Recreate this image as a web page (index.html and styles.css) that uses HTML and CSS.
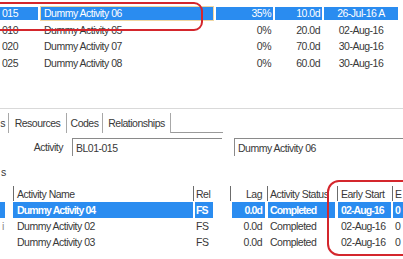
FILE: index.html
```html
<!DOCTYPE html>
<html>
<head>
<meta charset="utf-8">
<title>Relationships</title>
<link rel="stylesheet" href="styles.css">
</head>
<body>
<div class="screen">
  <div class="top-table">
    <div class="trow selected">
      <div class="c id">015</div>
      <div class="c name focus">Dummy Activity 06</div>
      <div class="c num">35%</div>
      <div class="c num">10.0d</div>
      <div class="c date">26-Jul-16 A</div>
    </div>
    <div class="trow">
      <div class="c id">010</div>
      <div class="c name">Dummy Activity 05</div>
      <div class="c num">0%</div>
      <div class="c num">20.0d</div>
      <div class="c date">02-Aug-16</div>
    </div>
    <div class="trow">
      <div class="c id">020</div>
      <div class="c name">Dummy Activity 07</div>
      <div class="c num">0%</div>
      <div class="c num">70.0d</div>
      <div class="c date">30-Aug-16</div>
    </div>
    <div class="trow">
      <div class="c id">025</div>
      <div class="c name">Dummy Activity 08</div>
      <div class="c num">0%</div>
      <div class="c num">60.0d</div>
      <div class="c date">30-Aug-16</div>
    </div>
  </div>

  <div class="panel">
    <div class="tabs">
      <div class="tab t1">s</div>
      <div class="tab t2">Resources</div>
      <div class="tab t3">Codes</div>
      <div class="tab t4 active">Relationships</div>
      <div class="tab-line"></div>
    </div>

    <div class="field-row">
      <div class="field-label">Activity</div>
      <div class="field f1">BL01-015</div>
      <div class="field f2">Dummy Activity 06</div>
    </div>

    <div class="section-label">s</div>

    <div class="rel-table">
      <div class="rrow head">
        <div class="h first"></div>
        <div class="h name">Activity Name</div>
        <div class="h rel">Rel</div>
        <div class="h lag">Lag</div>
        <div class="h status">Activity Status</div>
        <div class="h early">Early Start</div>
        <div class="h extra">E</div>
      </div>
      <div class="rrow selected">
        <div class="r first"><span class="stub"></span></div>
        <div class="r name">Dummy Activity 04</div>
        <div class="r rel">FS</div>
        <div class="r lag">0.0d</div>
        <div class="r status">Completed</div>
        <div class="r early">02-Aug-16</div>
        <div class="r extra">0</div>
      </div>
      <div class="rrow">
        <div class="r first">i</div>
        <div class="r name">Dummy Activity 02</div>
        <div class="r rel">FS</div>
        <div class="r lag">0.0d</div>
        <div class="r status">Completed</div>
        <div class="r early">02-Aug-16</div>
        <div class="r extra">0</div>
      </div>
      <div class="rrow">
        <div class="r first"></div>
        <div class="r name">Dummy Activity 03</div>
        <div class="r rel">FS</div>
        <div class="r lag">0.0d</div>
        <div class="r status">Completed</div>
        <div class="r early">02-Aug-16</div>
        <div class="r extra">0</div>
      </div>
    </div>
  </div>

  <div class="mark mark-top"></div>
  <div class="mark mark-bottom"></div>
</div>
</body>
</html>
```

FILE: styles.css
```css
* { box-sizing: border-box; margin: 0; padding: 0; }
html, body { background: #fff; }
body {
  margin: 0;
  font-family: "Liberation Sans", Arial, sans-serif;
  font-size: 10.5px;
  letter-spacing: -0.5px;
  color: #383838;
}
.screen {
  position: relative;
  width: 403px;
  height: 259px;
  overflow: hidden;
  background: #fff;
}

/* top activity table */
.top-table { padding-top: 5px; height: 108px; }
.trow {
  display: grid;
  grid-template-columns: 38px 174px 57px 47px 74px;
  column-gap: 2px;
  height: 16.5px;
}
.c {
  display: flex;
  align-items: center;
  white-space: nowrap;
  overflow: hidden;
}
.c.id { padding-left: 2px; }
.c.name { padding-left: 4px; }
.c.num { justify-content: flex-end; padding-right: 2px; }
.c.date { justify-content: center; }
.trow.selected .c { background: #2a8cf0; color: #fff; margin: 2px 0; }
.trow.selected .c.focus { margin: 1px 0; border: 1px solid #f0d6a0; padding-left: 3px; }

/* lower panel */
.panel { border-top: 1px solid #d9d9d9; }
.tabs {
  display: flex;
  align-items: flex-end;
  height: 24px;
}
.tab {
  height: 20px;
  display: flex;
  align-items: center;
  justify-content: center;
  border-right: 1px solid #a8a8a8;
  white-space: nowrap;
  overflow: hidden;
}
.t1 { width: 9px; justify-content: flex-end; padding-right: 3px; }
.t2 { width: 58px; }
.t3 { width: 36px; }
.t4 { width: 68px; }
.tab-line { width: 52px; height: 1px; background: #9a9a9a; }

.field-row {
  display: flex;
  margin-top: 5px;
  height: 18px;
}
.field-label {
  width: 63px;
  display: flex;
  align-items: center;
  justify-content: flex-end;
}
.field {
  display: flex;
  align-items: center;
  padding-left: 3px;
  border-top: 1px solid #8a8a8a;
  border-left: 1px solid #8a8a8a;
  white-space: nowrap;
}
.f1 { width: 150px; margin-left: 9px; }
.f2 { flex: 1; margin-left: 12px; }

.section-label {
  margin-top: 9px;
  height: 14px;
  line-height: 14px;
  padding-left: 1px;
}

/* relationships table */
.rel-table { margin-top: 7px; }
.rrow {
  display: grid;
  grid-template-columns: 13px 180px 37px 37px 70px 55px 11px;
  height: 16px;
}
.rrow.head { height: 15px; margin-bottom: 1px; }
.h, .r {
  display: flex;
  align-items: center;
  white-space: nowrap;
  overflow: hidden;
}
.h { border-left: 1px solid #6c6c6c; }
.h.first { border-left: none; }
.h.name { padding-left: 3px; }
.h.rel { padding-left: 2px; }
.h.lag { justify-content: flex-end; padding-right: 5px; }
.h.status { padding-left: 2px; }
.h.early { padding-left: 3px; }
.h.extra { padding-left: 2px; }

.r.first { padding-left: 2px; color: #888; }
.r.name { padding-left: 4px; }
.r.rel { margin-left: 2px; width: 18px; padding-left: 1px; }
.r.lag { margin: 0 2px; justify-content: flex-end; padding-right: 3px; }
.r.status { margin: 0 2px 0 1px; padding-left: 2px; }
.r.early { margin: 0 1px; padding-left: 3px; }
.r.extra { margin-left: 1px; padding-left: 2px; }

.rrow.selected .r { background: #2a8cf0; color: #fff; font-weight: bold; letter-spacing: -0.9px; }
.rrow.selected .r.first { background: transparent; padding-left: 0; }
.stub { display: block; width: 5px; height: 16px; background: #2a8cf0; }

/* red annotation marks */
.mark {
  position: absolute;
  border: 2.5px solid #d4262c;
}
.mark-top { left: -12px; top: 2px; width: 215px; height: 29px; border-radius: 9px; }
.mark-bottom { left: 327px; top: 180px; width: 100px; height: 76px; border-radius: 12px; }
```
